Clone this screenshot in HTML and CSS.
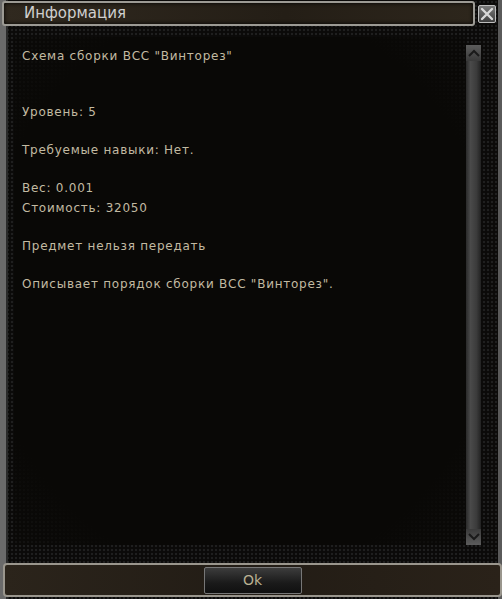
FILE: index.html
```html
<!DOCTYPE html>
<html>

<head>
    <meta name="viewport" content="width=device-width, initial-scale=1">
    <link rel="stylesheet" href="styles.css">
</head>

<body>
    <div id="window">
        <div class="titlebar">
            <div class="title">Информация</div>
            <button class="close">
                <svg width="14" height="14" viewBox="0 0 14 14">
                    <path d="M2 2 L12 12 M12 2 L2 12" stroke="#d8d8d8" stroke-width="2.4" stroke-linecap="round" />
                </svg>
            </button>
        </div>

        <div class="main">
            <div class="content">
                <p class="line gap-big">Схема сборки ВСС "Винторез"</p>
                <p class="line gap">Уровень: 5</p>
                <p class="line gap">Требуемые навыки: Нет.</p>
                <p class="line">Вес: 0.001</p>
                <p class="line gap">Стоимость: 32050</p>
                <p class="line gap">Предмет нельзя передать</p>
                <p class="line">Описывает порядок сборки ВСС "Винторез".</p>
            </div>
            <div class="scrollbar">
                <div class="arrow up">
                    <svg width="12" height="8" viewBox="0 0 12 8">
                        <path d="M1 7 L6 2 L11 7" stroke="#1a1a1a" stroke-width="2" fill="none" />
                    </svg>
                </div>
                <div class="track"></div>
                <div class="arrow down">
                    <svg width="12" height="8" viewBox="0 0 12 8">
                        <path d="M1 1 L6 6 L11 1" stroke="#1a1a1a" stroke-width="2" fill="none" />
                    </svg>
                </div>
            </div>
        </div>

        <div class="footer">
            <button id="ok">Ok</button>
        </div>
    </div>
</body>

</html>
```

FILE: styles.css
```css
body {
    margin: 0;
    background-color: #000;
    font-family: 'DejaVu Sans', Verdana, sans-serif;
}

#window {
    width: 502px;
    height: 599px;
    display: flex;
    flex-direction: column;
    box-sizing: border-box;
    background-color: #0b0a09;
    background-image: radial-gradient(circle at 2px 2px, #1f1f1f 1px, transparent 1.6px);
    background-size: 4px 4px;
    border-left: 6px solid #6a6a6a;
    border-right: 4px solid #5a5a5a;
    box-shadow: inset 2px 0 0 #2a2a2a;
}

/* title bar */
.titlebar {
    height: 27px;
    display: flex;
    align-items: center;
    margin-left: -4px;
    margin-right: -2px;
}

.title {
    flex: 1;
    height: 21px;
    line-height: 21px;
    padding-left: 20px;
    color: #cfcfcf;
    font-size: 15px;
    background: linear-gradient(90deg, #30291f, #241e16 60%, #2d261c);
    border: 2px solid #9c9a94;
    border-radius: 3px;
    box-shadow: inset 0 0 4px #000;
}

.close {
    width: 18px;
    height: 18px;
    margin: 0 4px 0 3px;
    padding: 0;
    display: flex;
    align-items: center;
    justify-content: center;
    background: linear-gradient(#7a7a7a, #3e3e3e);
    border: 1px solid #bdbdbd;
    border-radius: 2px;
}

/* main area */
.main {
    flex: 1;
    display: flex;
    padding: 10px 17px 18px 8px;
}

.content {
    flex: 1;
    padding: 9px 8px;
    background: radial-gradient(ellipse at center, #090806 80%, rgba(9, 8, 6, 0.5));
}

.line {
    margin: 0;
    color: #c2baa2;
    font-size: 12px;
    letter-spacing: 0.75px;
    line-height: 20px;
}

.gap {
    margin-bottom: 18px;
}

.gap-big {
    margin-bottom: 36px;
}

.scrollbar {
    width: 15px;
    margin-top: 8px;
    margin-bottom: 0;
    display: flex;
    flex-direction: column;
    background: linear-gradient(90deg, #2a2a2a, #4a4a4a 30%, #3b3b3b 70%, #222);
}

.arrow {
    height: 16px;
    display: flex;
    align-items: center;
    justify-content: center;
    background: linear-gradient(#5c5c5c, #3a3a3a);
}

.arrow.down {
    background: linear-gradient(#3a3a3a, #5c5c5c);
}

.track {
    flex: 1;
}

/* footer */
.footer {
    height: 34px;
    margin: 0 -4px 2px -3px;
    display: flex;
    justify-content: center;
    align-items: center;
    background: linear-gradient(90deg, #2b241b, #221c15 50%, #2a2219);
    border: 2px solid #9a968d;
    border-radius: 4px;
    box-sizing: border-box;
}

#ok {
    width: 98px;
    height: 27px;
    color: #b9b092;
    font-family: 'DejaVu Sans', sans-serif;
    font-size: 14px;
    background: linear-gradient(#3c3c3c, #1a1a1a 60%, #101010);
    border: 1px solid #777;
    border-radius: 2px;
}
```
